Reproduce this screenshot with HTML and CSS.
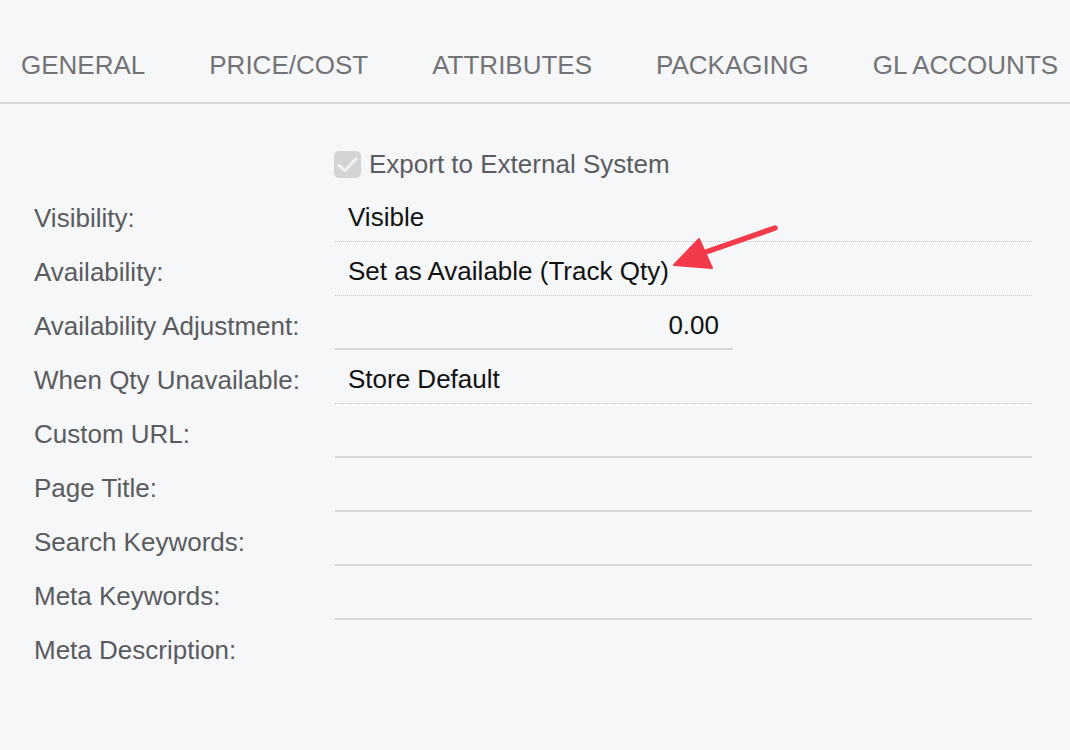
FILE: index.html
```html
<!DOCTYPE html>
<html>
<head>
<meta charset="utf-8">
<link rel="stylesheet" href="styles.css">
</head>
<body>
<div class="page">
  <nav class="tabs">
    <div class="tab first">GENERAL</div>
    <div class="tab">PRICE/COST</div>
    <div class="tab">ATTRIBUTES</div>
    <div class="tab">PACKAGING</div>
    <div class="tab">GL ACCOUNTS</div>
  </nav>
  <div class="form">
    <div class="check-row">
      <span class="checkbox">
        <svg width="27" height="27" viewBox="0 0 27 27"><path d="M5 14.5 L11 19.5 L22 8" fill="none" stroke="#f1f1f2" stroke-width="3.2" stroke-linecap="round" stroke-linejoin="round"/></svg>
      </span>
      <span class="check-label">Export to External System</span>
    </div>
    <div class="row">
      <div class="label">Visibility:</div>
      <div class="field dotted">Visible</div>
    </div>
    <div class="row">
      <div class="label">Availability:</div>
      <div class="field dotted">Set as Available (Track Qty)</div>
    </div>
    <div class="row">
      <div class="label">Availability Adjustment:</div>
      <div class="field solid short num">0.00</div>
    </div>
    <div class="row">
      <div class="label">When Qty Unavailable:</div>
      <div class="field dotted">Store Default</div>
    </div>
    <div class="row">
      <div class="label">Custom URL:</div>
      <div class="field solid"></div>
    </div>
    <div class="row">
      <div class="label">Page Title:</div>
      <div class="field solid"></div>
    </div>
    <div class="row">
      <div class="label">Search Keywords:</div>
      <div class="field solid"></div>
    </div>
    <div class="row">
      <div class="label">Meta Keywords:</div>
      <div class="field solid"></div>
    </div>
    <div class="row">
      <div class="label">Meta Description:</div>
    </div>
  </div>
  <svg class="arrow" width="1070" height="750" viewBox="0 0 1070 750">
    <line x1="706" y1="252" x2="775" y2="228" stroke="#f33a4a" stroke-width="5.5" stroke-linecap="round"/>
    <polygon points="674,265 699,239 712,268" fill="#f33a4a" stroke="#f33a4a" stroke-width="2" stroke-linejoin="round"/>
  </svg>
</div>
</body>
</html>
```

FILE: styles.css
```css
html, body {
  margin: 0;
  padding: 0;
  background: #f6f7f9;
}
body {
  font-family: "Liberation Sans", Arial, Helvetica, sans-serif;
  font-size: 26px;
  width: 1070px;
  height: 750px;
  overflow: hidden;
}
.page {
  position: relative;
  width: 1070px;
  height: 750px;
}
.tabs {
  display: flex;
  height: 102px;
  border-bottom: 2px solid #d5d6d8;
  box-sizing: content-box;
  padding-left: 21px;
}
.tab {
  display: flex;
  align-items: center;
  padding-top: 28px;
  margin-right: 64px;
  color: #737376;
  white-space: nowrap;
  line-height: 30px;
}
.form {
  padding-top: 33px;
  padding-left: 34px;
}
.check-row {
  display: flex;
  align-items: center;
  height: 51px;
  padding-top: 3px;
  box-sizing: border-box;
  padding-left: 300px;
}
.checkbox {
  width: 27px;
  height: 27px;
  border-radius: 5px;
  background: #d4d4d6;
  display: block;
}
.checkbox svg { display: block; }
.check-label {
  margin-left: 8px;
  color: #5c5c60;
}
.row {
  display: flex;
  height: 54px;
}
.label {
  width: 301px;
  display: flex;
  align-items: center;
  padding-top: 6px;
  box-sizing: border-box;
  color: #5a5b5e;
  white-space: nowrap;
}
.field {
  width: 697px;
  display: flex;
  align-items: center;
  padding: 6px 14px 0 13px;
  box-sizing: border-box;
  color: #111;
  white-space: nowrap;
}
.field.dotted {
  border-bottom: 1px dotted #c6c7ca;
}
.field.solid {
  border-bottom: 2px solid #d5d6d8;
}
.field.short {
  width: 398px;
}
.field.num {
  justify-content: flex-end;
}
.arrow {
  position: absolute;
  left: 0;
  top: 0;
  pointer-events: none;
}
```
